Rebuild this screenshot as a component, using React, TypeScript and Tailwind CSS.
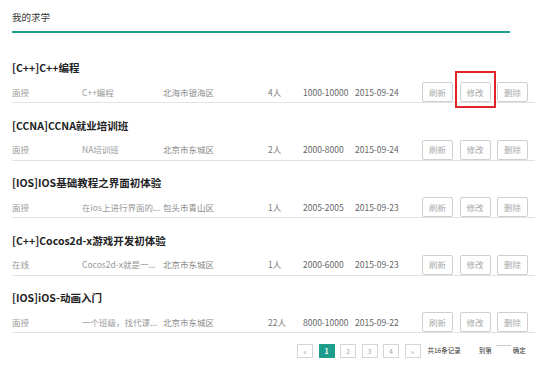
import React from "react";

const rows = [
  { title: "[C++]C++编程", type: "面授", desc: "C++编程", loc: "北海市银海区", n: "4人", sal: "1000-10000", date: "2015-09-24", hl: true },
  { title: "[CCNA]CCNA就业培训班", type: "面授", desc: "NA培训班", loc: "北京市东城区", n: "2人", sal: "2000-8000", date: "2015-09-24" },
  { title: "[IOS]IOS基础教程之界面初体验", type: "面授", desc: "在ios上进行界面的...", loc: "包头市青山区", n: "1人", sal: "2005-2005", date: "2015-09-23" },
  { title: "[C++]Cocos2d-x游戏开发初体验", type: "在线", desc: "Cocos2d-x就是一...", loc: "北京市东城区", n: "1人", sal: "2000-6000", date: "2015-09-23" },
  { title: "[IOS]iOS-动画入门", type: "面授", desc: "一个班级，找代课...", loc: "北京市东城区", n: "22人", sal: "8000-10000", date: "2015-09-22" },
];

function Btn({ label }: { label: string }) {
  return (
    <div className="w-[31px] h-[20px] border border-[#cfcfcf] rounded-[2px] flex items-center justify-center text-[8.5px] text-[#aaa] bg-white">
      {label}
    </div>
  );
}

export default function App() {
  return (
    <div
      className="w-[548px] h-[371px] bg-white overflow-hidden pl-[12px] pr-[13px]"
      style={{ fontFamily: '"Noto Sans CJK SC", "Noto Sans", sans-serif' }}
    >
      <div className="w-[498px] pt-[10px] pb-[7px] border-b-2 border-[#1d9e8c]">
        <div className="h-[14px] leading-[14px] text-[9.5px] text-[#333]">我的求学</div>
      </div>
      <div className="mt-[12.5px]">
        {rows.map((r, i) => (
          <div key={i} className="pt-[12.5px] border-b border-[#e2e2e2]">
            <div className="h-[20px] leading-[20px] text-[10.5px] font-bold text-[#222]">{r.title}</div>
            <div className="mt-[4px] h-[20px] flex items-center pr-[7px]">
              <div className="w-[70px] text-[8.5px] text-[#999]">{r.type}</div>
              <div className="w-[81px] text-[8.5px] text-[#999] whitespace-nowrap">{r.desc}</div>
              <div className="w-[105px] text-[8.5px] text-[#888]">{r.loc}</div>
              <div className="w-[35px] text-[8.5px] text-[#777]">{r.n}</div>
              <div className="w-[52px] text-[8.5px] text-[#666]">{r.sal}</div>
              <div className="text-[8.5px] text-[#666]">{r.date}</div>
              <div className="ml-auto flex gap-[6.5px]">
                <Btn label="刷新" />
                <div className="relative">
                  <Btn label="修改" />
                  {r.hl && (
                    <div className="absolute left-[-5px] right-[-5px] top-[-11px] bottom-[-6px] border-2 border-[#e0242a]" />
                  )}
                </div>
                <Btn label="删除" />
              </div>
            </div>
          </div>
        ))}
      </div>
      <div className="mt-[11px] flex items-center pl-[285px] text-[6.5px] whitespace-nowrap">
        <div className="flex gap-[5.5px] shrink-0">
          {["«", "1", "2", "3", "4", "»"].map((p) => (
            <div
              key={p}
              className={
                p === "1"
                  ? "w-[16px] h-[14px] flex items-center justify-center bg-[#1d9e8c] text-white font-bold text-[7px]"
                  : "w-[16px] h-[14px] flex items-center justify-center border border-[#d5d5d5] text-[#aaa] text-[7px]"
              }
            >
              {p}
            </div>
          ))}
        </div>
        <div className="ml-[7px] shrink-0 text-[#333]">共16条记录</div>
        <div className="ml-[18px] shrink-0 text-[#333]">到第</div>
        <div className="ml-[4px] shrink-0 w-[15px] h-[12px] border-t border-[#ccc]" />
        <div className="ml-[2px] shrink-0 text-[#333]">确定</div>
      </div>
    </div>
  );
}
